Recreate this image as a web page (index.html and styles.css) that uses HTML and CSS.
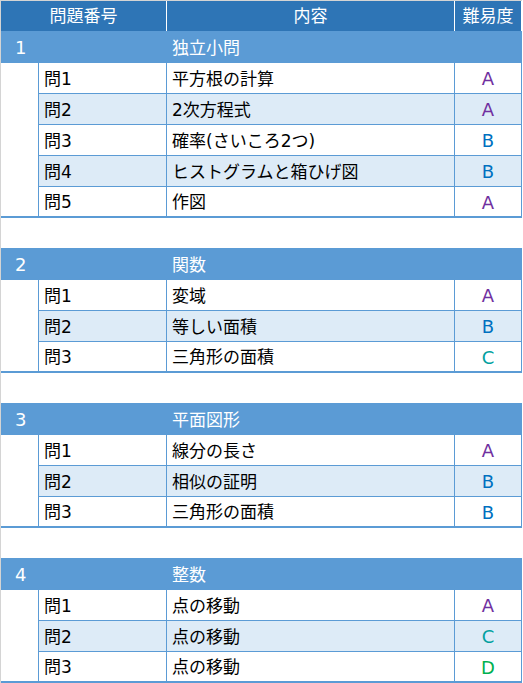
FILE: index.html
```html
<!DOCTYPE html>
<html lang="ja">
<head>
<meta charset="utf-8">
<link rel="stylesheet" href="styles.css">
</head>
<body>
<div class="sheet">
  <div class="head">
    <div class="h h-num">問題番号</div>
    <div class="h h-content">内容</div>
    <div class="h h-level">難易度</div>
  </div>

  <div class="section">
    <div class="sec-row"><span class="sec-no">1</span><span class="sec-title">独立小問</span></div>
    <div class="row"><span class="pad"></span><span class="c c1">問1</span><span class="c c2">平方根の計算</span><span class="c c3 ga">A</span></div>
    <div class="row alt"><span class="pad"></span><span class="c c1">問2</span><span class="c c2">2次方程式</span><span class="c c3 ga">A</span></div>
    <div class="row"><span class="pad"></span><span class="c c1">問3</span><span class="c c2">確率(さいころ2つ)</span><span class="c c3 gb">B</span></div>
    <div class="row alt"><span class="pad"></span><span class="c c1">問4</span><span class="c c2">ヒストグラムと箱ひげ図</span><span class="c c3 gb">B</span></div>
    <div class="row last"><span class="pad"></span><span class="c c1">問5</span><span class="c c2">作図</span><span class="c c3 ga">A</span></div>
  </div>
  <div class="spacer"></div>

  <div class="section">
    <div class="sec-row"><span class="sec-no">2</span><span class="sec-title">関数</span></div>
    <div class="row"><span class="pad"></span><span class="c c1">問1</span><span class="c c2">変域</span><span class="c c3 ga">A</span></div>
    <div class="row alt"><span class="pad"></span><span class="c c1">問2</span><span class="c c2">等しい面積</span><span class="c c3 gb">B</span></div>
    <div class="row last"><span class="pad"></span><span class="c c1">問3</span><span class="c c2">三角形の面積</span><span class="c c3 gc">C</span></div>
  </div>
  <div class="spacer"></div>

  <div class="section">
    <div class="sec-row"><span class="sec-no">3</span><span class="sec-title">平面図形</span></div>
    <div class="row"><span class="pad"></span><span class="c c1">問1</span><span class="c c2">線分の長さ</span><span class="c c3 ga">A</span></div>
    <div class="row alt"><span class="pad"></span><span class="c c1">問2</span><span class="c c2">相似の証明</span><span class="c c3 gb">B</span></div>
    <div class="row last"><span class="pad"></span><span class="c c1">問3</span><span class="c c2">三角形の面積</span><span class="c c3 gb">B</span></div>
  </div>
  <div class="spacer"></div>

  <div class="section">
    <div class="sec-row"><span class="sec-no">4</span><span class="sec-title">整数</span></div>
    <div class="row"><span class="pad"></span><span class="c c1">問1</span><span class="c c2">点の移動</span><span class="c c3 ga">A</span></div>
    <div class="row alt"><span class="pad"></span><span class="c c1">問2</span><span class="c c2">点の移動</span><span class="c c3 gc">C</span></div>
    <div class="row last"><span class="pad"></span><span class="c c1">問3</span><span class="c c2">点の移動</span><span class="c c3 gd">D</span></div>
  </div>
</div>
</body>
</html>
```

FILE: styles.css
```css
* { box-sizing: border-box; }
html, body { margin: 0; padding: 0; background: #ffffff; }
body {
  font-family: "DejaVu Sans", "Noto Sans CJK JP", sans-serif;
  font-size: 17px;
  color: #000;
  width: 523px;
  height: 683px;
  overflow: hidden;
}
.sheet {
  width: 522px;
  border-top: 1px solid #d4d4d4;
  border-left: 1px solid #d4d4d4;
}
.head {
  display: grid;
  grid-template-columns: 165px 288px 67px;
  height: 30px;
  background: #2e75b6;
  width: 520px;
}
.h {
  color: #fff;
  display: flex;
  align-items: center;
  justify-content: center;
  line-height: 1;
  padding-top: 1px;
}
.h-content, .h-level { border-left: 1px solid #fff; }

.section {
  border-bottom: 2px solid #5b9bd5;
  width: 521px;
}
.sec-row {
  height: 32px;
  background: #5b9bd5;
  color: #fff;
  display: grid;
  grid-template-columns: 165px 1fr;
  align-items: center;
  line-height: 1;
  padding-top: 2px;
}
.sec-no { padding-left: 14px; font-size: 18px; }
.sec-title { padding-left: 6px; }

.row {
  display: grid;
  grid-template-columns: 37px 128px 288px 68px;
  height: 31px;
  line-height: 1;
}
.row.last { height: 29px; }
.c {
  display: flex;
  align-items: center;
  border-left: 1px solid #5b9bd5;
  border-bottom: 1px solid #5b9bd5;
  padding-left: 5px;
  padding-top: 2px;
}
.row.last .c { border-bottom: none; }
.row.alt .c { background: #ddebf7; }
.c3 {
  border-right: 1px solid #5b9bd5;
  justify-content: center;
  padding-left: 0;
  font-size: 18px;
}
.ga { color: #7030a0; }
.gb { color: #0070c0; }
.gc { color: #00a0a0; }
.gd { color: #00b050; }

.spacer { height: 30px; }
```
